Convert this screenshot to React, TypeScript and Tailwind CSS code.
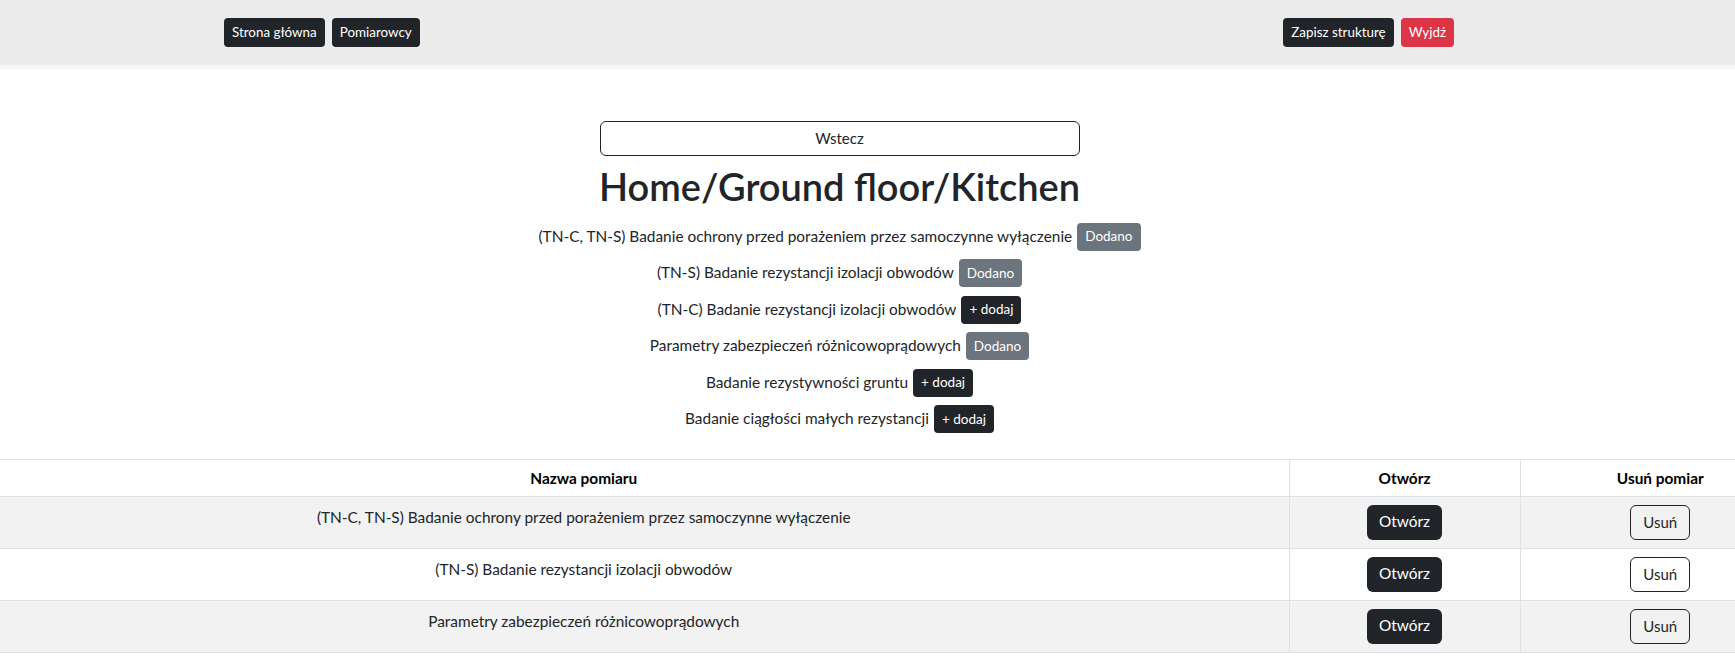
const measurements = [
  { name: "(TN-C, TN-S) Badanie ochrony przed porażeniem przez samoczynne wyłączenie", added: true },
  { name: "(TN-S) Badanie rezystancji izolacji obwodów", added: true },
  { name: "(TN-C) Badanie rezystancji izolacji obwodów", added: false },
  { name: "Parametry zabezpieczeń różnicowoprądowych", added: true },
  { name: "Badanie rezystywności gruntu", added: false },
  { name: "Badanie ciągłości małych rezystancji", added: false },
];

const added = measurements.filter((m) => m.added);

export default function App() {
  return (
    <div className="min-h-screen bg-white text-[#212529] font-['Lato',sans-serif]">
      <nav className="flex h-[65px] items-center justify-between bg-[#ececec] pl-[224px] pr-[281px]">
        <div className="flex gap-[7px]">
          <button className="h-[29px] rounded-[4px] bg-[#212529] px-2 text-[13.4px] text-white">
            Strona główna
          </button>
          <button className="h-[29px] rounded-[4px] bg-[#212529] px-2 text-[13.4px] text-white">
            Pomiarowcy
          </button>
        </div>
        <div className="flex gap-[7px]">
          <button className="h-[29px] rounded-[4px] bg-[#212529] px-2 text-[13.4px] text-white">
            Zapisz strukturę
          </button>
          <button className="h-[29px] rounded-[4px] bg-[#dc3545] px-2 text-[13.4px] text-white">
            Wyjdź
          </button>
        </div>
      </nav>
      <div className="h-[4px] bg-[#f5f6f8]" />

      <main className="flex flex-col items-center pr-[56px] pt-[52px]">
        <button className="h-[35px] w-[480px] rounded-[6px] border border-[#212529] text-[15px]">
          Wstecz
        </button>
        <h1 className="mt-[4px] h-[48px] text-[38px] font-semibold leading-[52px]">
          Home/Ground floor/Kitchen
        </h1>
        <div className="mt-[14px] flex flex-col items-center gap-[7.5px]">
          {measurements.map((m) => (
            <div key={m.name} className="flex h-[29px] items-center gap-[5px] text-[15.4px]">
              <span>{m.name}</span>
              {m.added ? (
                <span className="flex h-[28px] items-center rounded-[4px] bg-[#6c757d] px-2 text-[13.5px] text-white">
                  Dodano
                </span>
              ) : (
                <button className="h-[28px] rounded-[4px] bg-[#212529] px-2 text-[13.5px] text-white">
                  + dodaj
                </button>
              )}
            </div>
          ))}
        </div>
      </main>

      <div className="mt-[25px] overflow-hidden">
        <table className="w-full table-fixed border-collapse border-t border-[#dee2e6] text-[15.4px]">
          <colgroup>
            <col className="w-[1289px]" />
            <col className="w-[231px]" />
            <col />
          </colgroup>
          <thead>
            <tr className="border-b border-[#dee2e6]">
              <th className="py-[6px] pl-2 pr-[129px] text-center font-bold leading-6 text-black">
                Nazwa pomiaru
              </th>
              <th className="border-l border-[#dee2e6] px-2 py-[6px] text-center font-bold leading-6 text-black">
                Otwórz
              </th>
              <th className="border-l border-[#dee2e6] py-[6px] pl-[73px] pr-2 text-center font-bold leading-6 text-black whitespace-nowrap">
                Usuń pomiar
              </th>
            </tr>
          </thead>
          <tbody>
            {added.map((m, i) => (
              <tr
                key={m.name}
                className={`border-b border-[#dee2e6] ${i % 2 === 0 ? "bg-[#f2f2f2]" : "bg-white"}`}
              >
                <td className="py-2 pl-2 pr-[129px] text-center align-top leading-6">{m.name}</td>
                <td className="border-l border-[#dee2e6] px-2 py-2 text-center">
                  <button className="h-[35px] rounded-[6px] bg-[#212529] px-3 text-white">
                    Otwórz
                  </button>
                </td>
                <td className="border-l border-[#dee2e6] py-2 pl-[73px] pr-2 text-center">
                  <button className="h-[35px] rounded-[6px] border border-[#212529] px-3 text-[15px]">
                    Usuń
                  </button>
                </td>
              </tr>
            ))}
          </tbody>
        </table>
      </div>
    </div>
  );
}
